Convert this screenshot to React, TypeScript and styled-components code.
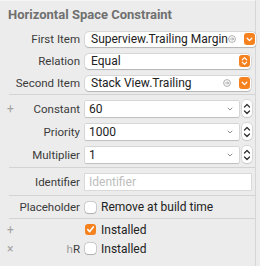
import styled, { createGlobalStyle } from "styled-components";

const GlobalStyle = createGlobalStyle`
  html, body {
    margin: 0;
    padding: 0;
    background: #ececec;
  }
  body {
    font-family: Roboto, "Liberation Sans", sans-serif;
    -webkit-font-smoothing: antialiased;
  }
`;

const Panel = styled.div`
  width: 256px;
  height: 266px;
  border-top: 1px solid #f5f5f5;
  border-right: 1px solid #d6d6d6;
  box-sizing: border-box;
`;

const Title = styled.div`
  height: 27px;
  line-height: 27px;
  padding-left: 8px;
  font-size: 13px;
  font-weight: 700;
  color: #707070;
`;

const Group = styled.div<{ $top?: number; $bottom?: number }>`
  padding-top: ${(p) => p.$top ?? 0}px;
  padding-bottom: ${(p) => p.$bottom ?? 0}px;
`;

const Separator = styled.div`
  margin-left: 9px;
  height: 1px;
  background: #d3d3d3;
`;

const Row = styled.div<{ $h: number }>`
  height: ${(p) => p.$h}px;
  display: grid;
  grid-template-columns: 20px 55px 1fr;
  column-gap: 5px;
  align-items: center;
  padding-right: 3px;
`;

const Gutter = styled.span`
  color: #a3a3a3;
  font-size: 12px;
  padding-left: 7px;
  line-height: 1;
`;

const Label = styled.span`
  justify-self: end;
  font-size: 11.5px;
  color: #3b3b3b;
  white-space: nowrap;
`;

const Dim = styled.span`
  color: #9a9a9a;
`;

const Popup = styled.div`
  height: 15px;
  background: #fff;
  border-radius: 4px;
  box-shadow: 0 0 0 0.5px rgba(0, 0, 0, 0.14), 0 0.5px 1px rgba(0, 0, 0, 0.18);
  display: flex;
  align-items: center;
  padding-left: 6px;
  padding-right: 1px;
  font-size: 12px;
  color: #222;
  margin-right: 1px;
`;

const PopupText = styled.span`
  flex: 1;
  white-space: nowrap;
  overflow: hidden;
`;

const OrangeButton = styled.span`
  width: 11px;
  height: 12px;
  border-radius: 3px;
  background: #f5821f;
  display: flex;
  align-items: center;
  justify-content: center;
  flex-shrink: 0;
`;

const GoIcon = styled.svg`
  margin-right: 8px;
  flex-shrink: 0;
`;

const ComboLine = styled.div`
  display: flex;
  align-items: center;
  gap: 3px;
`;

const Combo = styled.div`
  flex: 1;
  height: 16px;
  background: #fff;
  border-radius: 1px;
  box-shadow: 0 0 0 0.5px rgba(0, 0, 0, 0.16), 0 0.5px 1px rgba(0, 0, 0, 0.12);
  display: flex;
  align-items: center;
  padding-left: 4px;
  padding-right: 6px;
  font-size: 12px;
  color: #222;
`;

const Stepper = styled.span`
  width: 10px;
  height: 17px;
  background: #fff;
  border-radius: 4px;
  box-shadow: 0 0 0 0.5px rgba(0, 0, 0, 0.16), 0 0.5px 1px rgba(0, 0, 0, 0.15);
  display: flex;
  align-items: center;
  justify-content: center;
`;

const Field = styled.div`
  height: 16px;
  background: #fff;
  box-shadow: 0 0 0 0.5px rgba(0, 0, 0, 0.16);
  display: flex;
  align-items: center;
  padding-left: 4px;
  font-size: 12px;
  color: #bdbdbd;
  margin-right: 1px;
`;

const CheckLine = styled.label`
  display: flex;
  align-items: center;
  gap: 5px;
  font-size: 12px;
  color: #222;
`;

const Box = styled.span<{ $on?: boolean }>`
  width: 11px;
  height: 11px;
  border-radius: 3px;
  box-sizing: border-box;
  background: ${(p) => (p.$on ? "#f5821f" : "#fff")};
  box-shadow: ${(p) =>
    p.$on ? "none" : "0 0 0 0.5px rgba(0,0,0,0.25), 0 0.5px 1px rgba(0,0,0,0.15)"};
  display: flex;
  align-items: center;
  justify-content: center;
`;

function ChevronDown() {
  return (
    <svg width="7" height="5" viewBox="0 0 7 5">
      <path d="M1.2 1.3 L3.5 3.6 L5.8 1.3" fill="none" stroke="#fff" strokeWidth="1.3" strokeLinecap="round" strokeLinejoin="round" />
    </svg>
  );
}

function ChevronUpDown() {
  return (
    <svg width="7" height="10" viewBox="0 0 7 10">
      <path d="M1.3 3.8 L3.5 1.6 L5.7 3.8 M1.3 6.2 L3.5 8.4 L5.7 6.2" fill="none" stroke="#fff" strokeWidth="1.2" strokeLinecap="round" strokeLinejoin="round" />
    </svg>
  );
}

function StepArrows() {
  return (
    <svg width="8" height="14" viewBox="0 0 8 14">
      <path d="M1.5 5 L4 2.5 L6.5 5 M1.5 9 L4 11.5 L6.5 9" fill="none" stroke="#333" strokeWidth="1.3" strokeLinecap="round" strokeLinejoin="round" />
    </svg>
  );
}

function SmallChevron() {
  return (
    <svg width="6" height="4" viewBox="0 0 6 4" style={{ marginLeft: "auto" }}>
      <path d="M1 1 L3 3 L5 1" fill="none" stroke="#8e8e8e" strokeWidth="1" strokeLinecap="round" strokeLinejoin="round" />
    </svg>
  );
}

function Go() {
  return (
    <GoIcon width="8" height="8" viewBox="0 0 8 8">
      <circle cx="4" cy="4" r="3.4" fill="none" stroke="#9a9a9a" strokeWidth="0.8" />
      <path d="M2.2 4 H5.6 M4.2 2.6 L5.6 4 L4.2 5.4" fill="none" stroke="#9a9a9a" strokeWidth="0.8" strokeLinecap="round" strokeLinejoin="round" />
    </GoIcon>
  );
}

function Check() {
  return (
    <svg width="9" height="9" viewBox="0 0 9 9">
      <path d="M1.8 4.6 L3.7 6.6 L7.3 1.9" fill="none" stroke="#fff" strokeWidth="1.6" strokeLinecap="round" strokeLinejoin="round" />
    </svg>
  );
}

function ItemPopup({ value, go, updown }: { value: string; go?: boolean; updown?: boolean }) {
  return (
    <Popup>
      <PopupText>{value}</PopupText>
      {go && <Go />}
      <OrangeButton>{updown ? <ChevronUpDown /> : <ChevronDown />}</OrangeButton>
    </Popup>
  );
}

function NumberCombo({ value }: { value: string }) {
  return (
    <ComboLine>
      <Combo>
        {value}
        <SmallChevron />
      </Combo>
      <Stepper>
        <StepArrows />
      </Stepper>
    </ComboLine>
  );
}

export default function App() {
  return (
    <>
      <GlobalStyle />
      <Panel>
        <Title>Horizontal Space Constraint</Title>
        <Group>
          <Row $h={22}>
            <span />
            <Label>First Item</Label>
            <ItemPopup value="Superview.Trailing Margin" go />
          </Row>
          <Row $h={22}>
            <span />
            <Label>Relation</Label>
            <ItemPopup value="Equal" updown />
          </Row>
          <Row $h={22}>
            <span />
            <Label>Second Item</Label>
            <ItemPopup value="Stack View.Trailing" go />
          </Row>
        </Group>
        <Separator />
        <Group $top={2} $bottom={1}>
          <Row $h={23}>
            <Gutter>+</Gutter>
            <Label>Constant</Label>
            <NumberCombo value="60" />
          </Row>
          <Row $h={23}>
            <span />
            <Label>Priority</Label>
            <NumberCombo value="1000" />
          </Row>
          <Row $h={23}>
            <span />
            <Label>Multiplier</Label>
            <NumberCombo value="1" />
          </Row>
        </Group>
        <Separator />
        <Group $top={3} $bottom={2}>
          <Row $h={22}>
            <span />
            <Label>Identifier</Label>
            <Field>Identifier</Field>
          </Row>
        </Group>
        <Separator />
        <Group>
          <Row $h={22}>
            <span />
            <Label>Placeholder</Label>
            <CheckLine>
              <Box />
              Remove at build time
            </CheckLine>
          </Row>
        </Group>
        <Separator />
        <Group $top={1}>
          <Row $h={19}>
            <Gutter>+</Gutter>
            <span />
            <CheckLine>
              <Box $on>
                <Check />
              </Box>
              Installed
            </CheckLine>
          </Row>
          <Row $h={19}>
            <Gutter>×</Gutter>
            <Label>
              <Dim>h</Dim>R
            </Label>
            <CheckLine>
              <Box />
              Installed
            </CheckLine>
          </Row>
        </Group>
      </Panel>
    </>
  );
}
